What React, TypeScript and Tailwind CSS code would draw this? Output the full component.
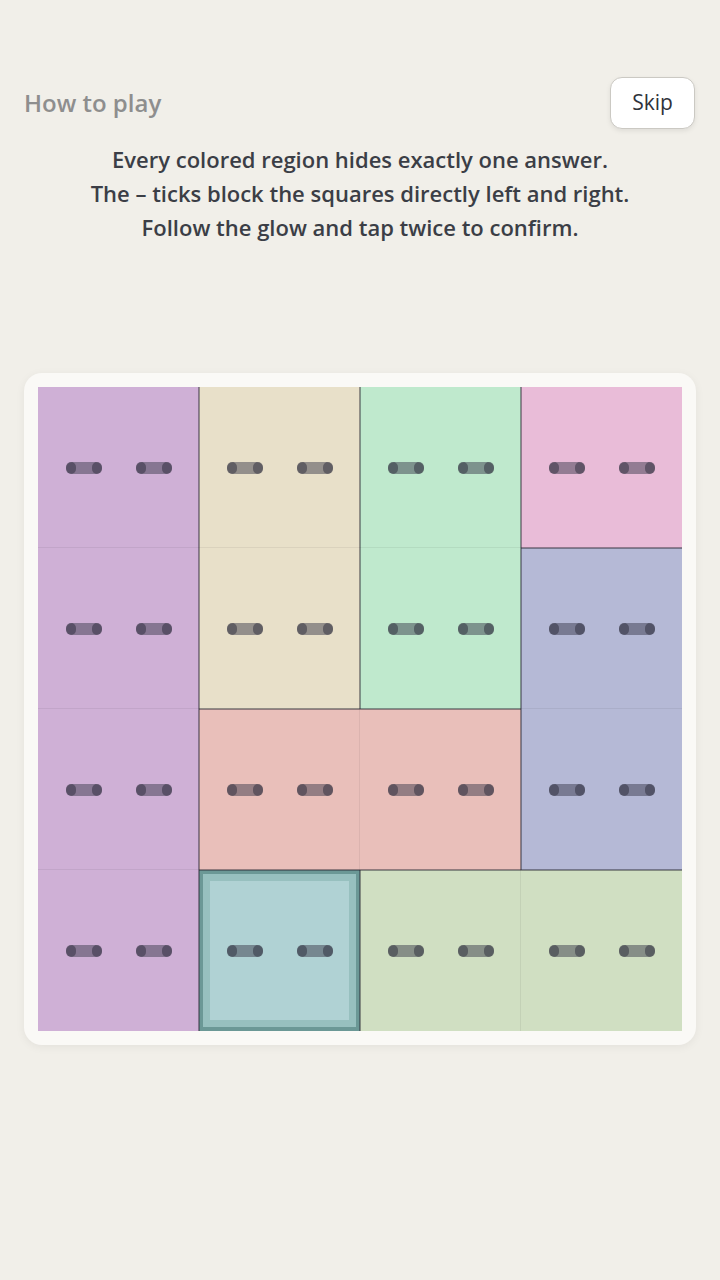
import React from 'react';

type Region = 'purple' | 'beige' | 'mint' | 'pink' | 'slate' | 'rose' | 'teal' | 'sage';

const FILL: Record<Region, string> = {
  purple: 'bg-[#cfb0d6]',
  beige: 'bg-[#e8e0c9]',
  mint: 'bg-[#bfe9cd]',
  pink: 'bg-[#e9bcd8]',
  slate: 'bg-[#b5b9d6]',
  rose: 'bg-[#e9bfba]',
  teal: 'bg-[#97c0bf]',
  sage: 'bg-[#d0dfc2]',
};

// board layout, row by row
const BOARD: Region[][] = [
  ['purple', 'beige', 'mint', 'pink'],
  ['purple', 'beige', 'mint', 'slate'],
  ['purple', 'rose', 'rose', 'slate'],
  ['purple', 'teal', 'sage', 'sage'],
];

const SELECTED = { r: 3, c: 1 };

function Tick() {
  return (
    <div className="relative h-3 w-9 rounded-full bg-[rgba(55,55,72,0.48)]">
      <span className="absolute left-0 top-0 h-3 w-[10px] rounded-full bg-[rgba(35,35,50,0.45)]" />
      <span className="absolute right-0 top-0 h-3 w-[10px] rounded-full bg-[rgba(35,35,50,0.45)]" />
    </div>
  );
}

function Ticks() {
  return (
    <div className="flex items-center justify-center gap-[34px]">
      <Tick />
      <Tick />
    </div>
  );
}

function Cell({ r, c }: { r: number; c: number }) {
  const region = BOARD[r][c];
  const right = c < 3 ? BOARD[r][c + 1] : null;
  const below = r < 3 ? BOARD[r + 1][c] : null;
  const selected = r === SELECTED.r && c === SELECTED.c;

  return (
    <div className={`relative h-[161px] ${FILL[region]}`}>
      {selected ? (
        <div className="h-full border-4 border-[#6b9896] p-[7px]">
          <div className="flex h-full items-center justify-center bg-[#b0d2d4]">
            <Ticks />
          </div>
        </div>
      ) : (
        <div className="flex h-full items-center justify-center">
          <Ticks />
        </div>
      )}
      {right &&
        (right !== region ? (
          <div className="absolute -right-px top-0 z-10 h-full w-[2px] bg-[rgba(40,40,50,0.45)]" />
        ) : (
          <div className="absolute right-0 top-0 z-10 h-full w-px bg-[rgba(0,0,0,0.06)]" />
        ))}
      {below &&
        (below !== region ? (
          <div className="absolute -bottom-px left-0 z-10 h-[2px] w-full bg-[rgba(40,40,50,0.45)]" />
        ) : (
          <div className="absolute bottom-0 left-0 z-10 h-px w-full bg-[rgba(0,0,0,0.06)]" />
        ))}
    </div>
  );
}

export default function App() {
  return (
    <div className="min-h-[1280px] w-[720px] bg-[#f1efe9] font-['Open_Sans',sans-serif]">
      <div className="flex items-center justify-between pl-6 pr-[25px] pt-[77px]">
        <h1 className="text-[24px] font-semibold text-[#8e8e8e]">How to play</h1>
        <button className="h-[52px] w-[85px] rounded-xl border-[1.5px] border-[#cbc9c3] bg-white text-[21px] text-[#2f323a] shadow-[0_2px_5px_rgba(0,0,0,0.08)]">
          Skip
        </button>
      </div>

      <div className="mt-[13px] text-center text-[22px] font-semibold leading-[34px] text-[#3b3e46]">
        <p>Every colored region hides exactly one answer.</p>
        <p>The – ticks block the squares directly left and right.</p>
        <p>Follow the glow and tap twice to confirm.</p>
      </div>

      <div className="mx-6 mt-[129px] rounded-[18px] bg-[#faf9f6] p-[14px] shadow-[0_2px_10px_rgba(0,0,0,0.06)]">
        <div className="grid grid-cols-4">
          {BOARD.map((row, r) => row.map((_, c) => <Cell key={`${r}-${c}`} r={r} c={c} />))}
        </div>
      </div>
    </div>
  );
}
